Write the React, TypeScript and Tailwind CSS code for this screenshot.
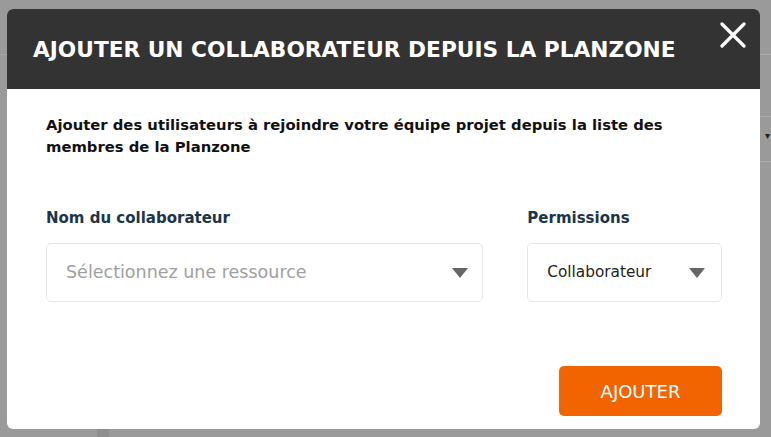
import React from 'react';

const font = { fontFamily: '"DejaVu Sans", "Liberation Sans", sans-serif' };

function Caret() {
  return (
    <svg width="16" height="10" viewBox="0 0 16 10" className="shrink-0">
      <path d="M0 0h16L8 10z" fill="#666666" />
    </svg>
  );
}

function CloseIcon() {
  return (
    <svg width="26" height="26" viewBox="0 0 26 26">
      <path d="M2 2L24 24M24 2L2 24" stroke="#ffffff" strokeWidth="3.2" strokeLinecap="round" />
    </svg>
  );
}

export default function App() {
  return (
    <div className="relative w-[771px] h-[437px] overflow-hidden bg-[#9a9a9a]" style={font}>
      {/* page behind the overlay */}
      <div className="absolute left-0 right-0 top-[54px] h-px bg-[#a8a8a8]" />
      <div className="absolute right-0 w-[12px] top-[116px] h-px bg-[#a8a8a8]" />
      <div className="absolute right-0 w-[12px] top-[161px] h-px bg-[#a8a8a8]" />
      <div className="absolute right-[1px] top-[131px] text-[10px] leading-none text-[#222]">▾</div>
      <div className="absolute left-[97px] w-[12px] top-[420px] bottom-0 bg-[#8f8f8f]" />

      <div className="absolute left-[7px] top-[9px] w-[753px] h-[420px] rounded-[6px] bg-white overflow-hidden flex flex-col">
        <div className="h-[80px] shrink-0 bg-[#333333] flex items-center justify-between pl-[26px] pr-[14px]">
          <h1 className="text-white font-bold uppercase text-[21.7px] tracking-[0px] leading-none mt-[2px]">
            Ajouter un collaborateur depuis la Planzone
          </h1>
          <button className="self-start mt-[13px]">
            <CloseIcon />
          </button>
        </div>

        <div className="flex-1 flex flex-col pl-[39px] pr-[38px] pt-[25px]">
          <p className="text-[14.8px] font-bold leading-[22px] text-[#111111] w-[630px]">
            Ajouter des utilisateurs à rejoindre votre équipe projet depuis la liste des membres de la Planzone
          </p>

          <div className="flex gap-[44px] mt-[50px]">
            <div className="flex flex-col w-[438px]">
              <label className="text-[15px] font-bold text-[#1b3549] leading-[20px]">Nom du collaborateur</label>
              <div className="mt-[15px] h-[59px] rounded-[5px] border border-[#e6e6e6] flex items-center justify-between pl-[19px] pr-[14px]">
                <span className="text-[17.5px] text-[#a0a0a0]">Sélectionnez une ressource</span>
                <Caret />
              </div>
            </div>
            <div className="flex flex-col w-[195px]">
              <label className="text-[15px] font-bold text-[#1b3549] leading-[20px]">Permissions</label>
              <div className="mt-[15px] h-[59px] rounded-[5px] border border-[#e6e6e6] flex items-center justify-between pl-[19px] pr-[16px]">
                <span className="text-[15.3px] text-[#222]">Collaborateur</span>
                <Caret />
              </div>
            </div>
          </div>

          <div className="flex justify-end mt-[64px]">
            <button className="w-[163px] h-[50px] rounded-[5px] bg-[#f26400] text-white text-[18px] uppercase">
              Ajouter
            </button>
          </div>
        </div>
      </div>
    </div>
  );
}
